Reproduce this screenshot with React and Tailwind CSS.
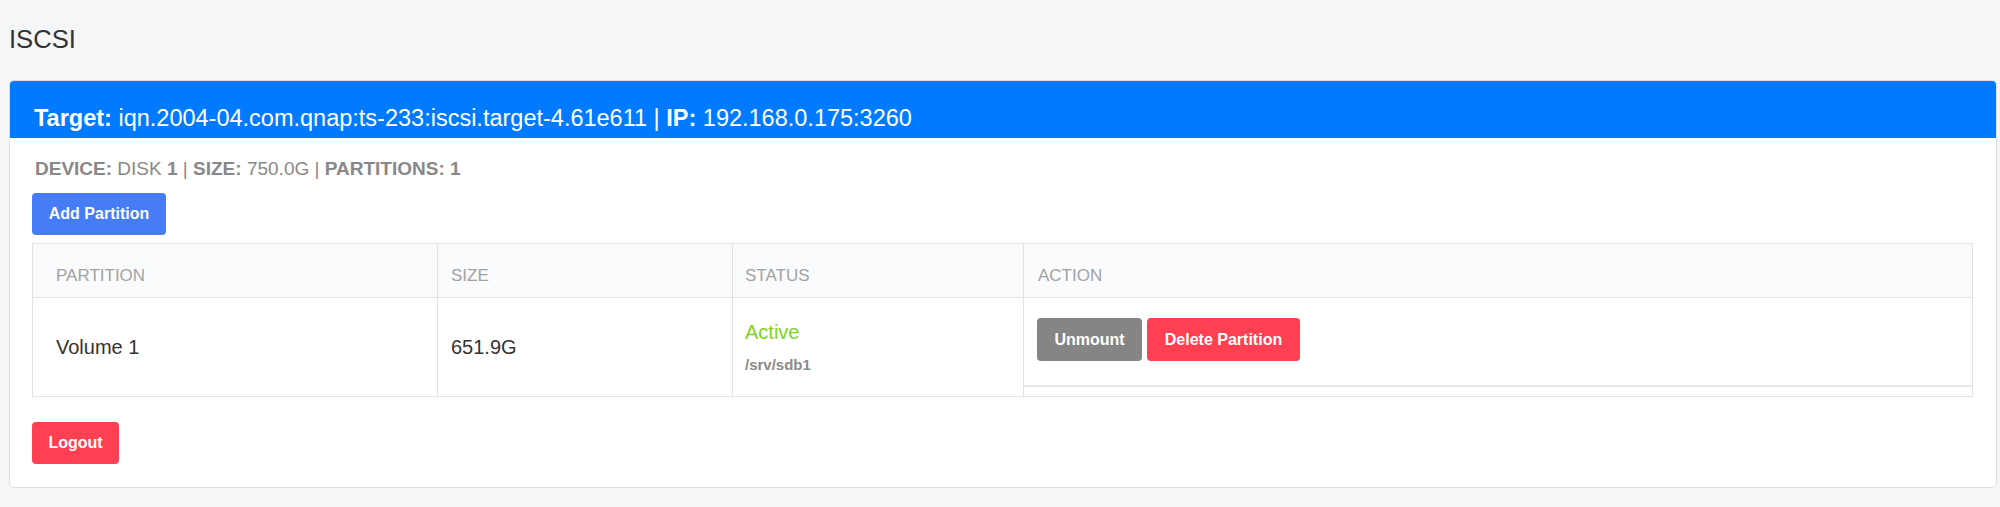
export default function App() {
  const font = { fontFamily: '"Liberation Sans", Arial, sans-serif' };

  return (
    <div
      className="min-h-[507px] bg-[#f5f6f8] pl-[9px] pr-[3px] pt-[24px] pb-[20px] text-[#333]"
      style={font}
    >
      <h2 className="text-[25.6px] leading-[30px] font-normal text-[#333] mb-[26px]">
        ISCSI
      </h2>

      <div className="bg-white border border-[#dedfe2] rounded-[5px] overflow-hidden">
        <div className="bg-[#007bff] h-[57px] pt-[23px] px-[24px] text-white text-[23.5px] leading-[28px] whitespace-nowrap">
          <span className="font-bold">Target:</span>{" "}
          iqn.2004-04.com.qnap:ts-233:iscsi.target-4.61e611 |{" "}
          <span className="font-bold">IP:</span> 192.168.0.175:3260
        </div>

        <div className="pl-[22px] pr-[23px] pt-[20px] pb-[23px]">
          <div className="text-[19px] leading-[22px] text-[#888] whitespace-nowrap pl-[3px]">
            <span className="font-bold">DEVICE:</span> DISK{" "}
            <span className="font-bold">1</span> |{" "}
            <span className="font-bold">SIZE:</span> 750.0G |{" "}
            <span className="font-bold">PARTITIONS: 1</span>
          </div>

          <button className="mt-[13px] h-[42px] w-[134px] rounded-[4px] bg-[#467cf6] text-white text-[16px] font-bold">
            Add Partition
          </button>

          <table className="mt-[8px] w-full table-fixed border-collapse border border-[#e3e3e5]">
            <colgroup>
              <col className="w-[405px]" />
              <col className="w-[295px]" />
              <col className="w-[291px]" />
              <col />
            </colgroup>
            <thead>
              <tr className="bg-[#fafbfd] text-[17px] leading-[20px] text-[#a2a2a2] text-left">
                <th className="font-normal border border-[#e3e3e5] pl-[23px] pt-[22px] pb-[11px]">
                  PARTITION
                </th>
                <th className="font-normal border border-[#e3e3e5] pl-[13px] pt-[22px] pb-[11px]">
                  SIZE
                </th>
                <th className="font-normal border border-[#e3e3e5] pl-[12px] pt-[22px] pb-[11px]">
                  STATUS
                </th>
                <th className="font-normal border border-[#e3e3e5] pl-[14px] pt-[22px] pb-[11px]">
                  ACTION
                </th>
              </tr>
            </thead>
            <tbody>
              <tr className="h-[99px]">
                <td className="border border-[#e3e3e5] pl-[23px] text-[20px] text-[#333] align-middle">
                  Volume 1
                </td>
                <td className="border border-[#e3e3e5] pl-[13px] text-[20px] text-[#333] align-middle">
                  651.9G
                </td>
                <td className="border border-[#e3e3e5] pl-[12px] align-middle">
                  <div className="text-[20px] leading-[24px] text-[#7ed321]">
                    Active
                  </div>
                  <div className="mt-[12px] text-[15px] leading-[18px] font-bold text-[#8a8a8a]">
                    /srv/sdb1
                  </div>
                </td>
                <td className="border border-[#e3e3e5] p-0 align-top">
                  <div className="h-[89px] border-b-2 border-[#e8e8ea] pl-[13px] pt-[20px] flex gap-[5px] items-start">
                    <button className="h-[43px] w-[105px] rounded-[4px] bg-[#858585] text-white text-[16px] font-bold">
                      Unmount
                    </button>
                    <button className="h-[43px] w-[153px] rounded-[4px] bg-[#ff4052] text-white text-[16px] font-bold">
                      Delete Partition
                    </button>
                  </div>
                </td>
              </tr>
            </tbody>
          </table>

          <button className="mt-[25px] h-[42px] w-[87px] rounded-[4px] bg-[#ff4052] text-white text-[16px] font-bold">
            Logout
          </button>
        </div>
      </div>
    </div>
  );
}
